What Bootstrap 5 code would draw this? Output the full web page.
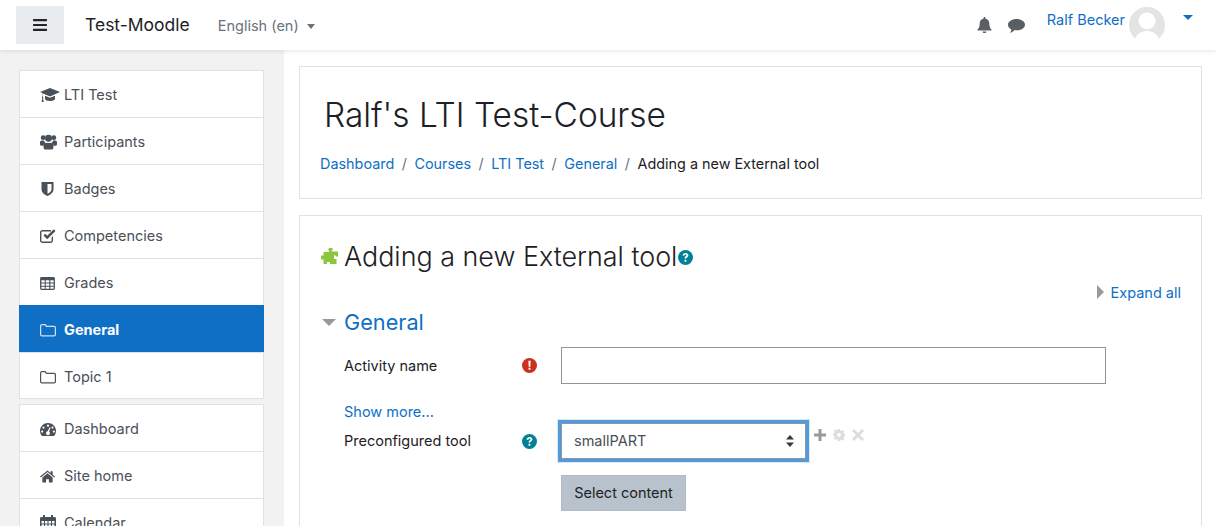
<!DOCTYPE html>
<html lang="en">
<head>
<meta charset="UTF-8" />
<title>Adding a new External tool</title>
<link href="https://cdn.jsdelivr.net/npm/bootstrap@5.3.2/dist/css/bootstrap.min.css" rel="stylesheet" />
<style>
  html, body { height: 526px; overflow: hidden; }
  body { font-family: Inter, "Liberation Sans", sans-serif; font-size: 14.5px; color: #1d2125; background: #fff; }
  a { color: #0f6fc5; text-decoration: none; }
  .top-bar { height: 50px; padding: 0 16px; box-shadow: 0 2px 4px rgba(0,0,0,.08); position: relative; z-index: 2; }
  .menu-toggle { width: 48px; height: 38px; background: #e9ecef; border: 0; padding: 0; }
  .site-name { font-size: 17.5px; margin-left: 21px; margin-top: 1px; color: #1d2125; }
  .lang-menu { margin-left: 28px; margin-top: 1px; color: #6a737b; }
  .caret-down { display: inline-block; width: 0; height: 0; border-left: 4.5px solid transparent; border-right: 4.5px solid transparent; border-top: 5px solid currentColor; }
  .lang-menu .caret-down { margin-left: 8px; vertical-align: 2px; }
  .top-icon { fill: #5a5f64; }
  .comment-ic { margin-left: 16px; margin-top: 2px; }
  .user-name { margin-left: 22px; margin-bottom: 10px; }
  .user-pic { width: 36px; height: 36px; margin-left: 4px; margin-right: 18px; }
  .user-caret { color: #0f6fc5; border-left-width: 5px; border-right-width: 5px; margin-right: 7px; margin-bottom: 16px; }
  .page-wrap { height: 476px; overflow: hidden; }
  .side-col { width: 284px; flex: none; background: #f2f2f2; padding: 20px 20px 0 19px; }
  .side-list { border-radius: 0; margin-bottom: 5px; }
  .side-list .list-group-item { height: 47px; padding: 2px 0 0 20px; display: flex; align-items: center; color: #495057; border-radius: 0; border-color: #dee2e6; border-width: 1px 1px 0; margin-top: 0; }
  .side-list .list-group-item:last-child { border-bottom-width: 1px; }
  .side-list .list-group-item.active { background: #0f6fc5; border-color: #0f6fc5; color: #fff; font-weight: 700; margin-top: 0; }
  .side-icon { width: 24px; flex: none; display: flex; }
  .side-icon svg { fill: #495057; }
  .side-icon .folder-ic { fill: none; stroke: #495057; }
  .active .side-icon .folder-ic { stroke: #cfe2f5; }
  .main-col { padding: 16px 14px 0 15px; min-width: 0; }
  .head-box, .form-box { border: 1px solid #dee2e6; border-radius: 0; }
  .head-box { height: 133px; padding: 0 20px; margin-bottom: 16px; }
  .course-title { font-size: 33.4px; font-weight: 300; line-height: 42px; margin: 27px 0 0 4px; color: #1d2125; }
  .crumbs { margin: 17px 0 0; font-size: 14.4px; --bs-breadcrumb-item-padding-x: 7.5px; --bs-breadcrumb-divider-color: #6a737b; --bs-breadcrumb-item-active-color: #1d2125; }
  .form-box { padding: 19px 20px 20px; height: 400px; }
  .page-head { height: 42px; }
  .page-head h2 { font-size: 26.9px; font-weight: 300; margin: 0 0 0 5px; line-height: 42px; }
  .help-ic { margin-left: 1px; margin-top: 3px; }
  .expand-row { height: 20px; margin-top: 5px; }
  .arrow-right { display: inline-block; width: 0; height: 0; border-top: 7px solid transparent; border-bottom: 7px solid transparent; border-left: 7px solid #999; margin-right: 7px; vertical-align: -1px; }
  .sec-head { margin-top: 3px; height: 34px; }
  .arrow-down { display: inline-block; width: 0; height: 0; border-left: 7px solid transparent; border-right: 7px solid transparent; border-top: 7px solid #999; margin-right: 8px; margin-left: 2px; }
  .sec-head a { font-size: 21.7px; font-weight: 400; }
  .field-label { width: 202px; padding-left: 24px; flex: none; }
  .field-mark { width: 39px; flex: none; display: flex; }
  .name-row { margin-top: 8px; height: 37px; }
  .name-input { width: 545px; height: 37px; border: 1px solid #8f959e; border-radius: 0; }
  .more-row { margin-top: 17px; padding-left: 24px; height: 20px; }
  .tool-row { height: 40px; }
  .tool-select { width: 245px; height: 36px; margin: 0 3px 0 0; border-radius: 0; border: 1px solid #8f959e; outline: 3px solid #4f9bdc; font-size: 14.5px; color: #495057; padding: 0 24px 0 12px; background-image: url("data:image/svg+xml,%3csvg xmlns='http://www.w3.org/2000/svg' viewBox='0 0 8 12'%3e%3cpath fill='%23343a40' d='M4 0 8 4.500H0zM4 12 0 7.500H8z'/%3e%3c/svg%3e"); background-size: 8px 12px; background-position: right 11px center; box-shadow: 0 0 0 4px #dbe9f6; }
  .tool-actions { margin-left: 5px; margin-bottom: 13px; gap: 7px; }
  .select-btn { width: 125px; height: 36px; margin: 14px 0 0 241px; background: #b8c2cc; border: 1px solid #b0bac4; border-radius: 0; color: #1d2125; font-size: 14.5px; padding: 0; }
</style>
</head>
<body>
<svg width="0" height="0" class="d-none">
  <symbol id="ic-cap" viewBox="0 0 20 16"><path d="M10 1 0 5l2.600 1v3.200c-.5.300-.7.700-.7 1.100 0 .4.200.7.400 1L1.600 15h2.200l-.8-3.600c.3-.3.400-.6.400-1 0-.4-.2-.8-.5-1V6.500L10 9.500 20 5zM5 8.700v3c0 1.300 2.300 2.300 5 2.300s5-1 5-2.300v-3l-5 2z"/></symbol>
  <symbol id="ic-users" viewBox="0 0 18 16"><circle cx="3.400" cy="3.400" r="2.600"/><circle cx="14.600" cy="3.400" r="2.600"/><circle cx="9" cy="4" r="3.700"/><path d="M0 8.500c0-1.200.8-2.200 2-2.200h2.100c.3 1 .9 1.800 1.700 2.400-1.300.5-2.200 1.700-2.300 3.200h-2C.5 11.900 0 11.300 0 10.500zM18 8.500c0-1.200-.8-2.200-2-2.200h-2.100c-.3 1-.9 1.800-1.700 2.400 1.300.5 2.200 1.700 2.300 3.200h2c1 0 1.500-.6 1.500-1.400zM6 9h6c1.300 0 2.200 1 2.200 2.400v2.400c0 1.200-.7 2.200-1.800 2.200H5.600c-1.100 0-1.800-1-1.800-2.200v-2.400C3.800 10 4.700 9 6 9z"/></symbol>
  <symbol id="ic-shield" viewBox="0 0 14 16"><path d="M1 1h12v7.500c0 3-3.200 5.500-6 6.500-2.800-1-6-3.500-6-6.500zM7 3v9.800c2-.9 4-2.500 4-4.400V3z"/></symbol>
  <symbol id="ic-check" viewBox="0 0 16 16"><path d="M2.500 2H11v1.400H2.500c-.6 0-1.100.5-1.100 1.100v7.900c0 .6.500 1.100 1.100 1.100h8c.6 0 1.100-.5 1.100-1.100V9.500L13 8v4.400c0 1.400-1.100 2.500-2.500 2.500h-8C1.100 14.900 0 13.800 0 12.400V4.500C0 3.100 1.100 2 2.500 2z"/><path d="m3.500 7.500 1.700-1.700 2 2L13.800 1.300 15.500 3 7.200 11.300z"/></symbol>
  <symbol id="ic-table" viewBox="0 0 16 14"><path fill-rule="evenodd" d="M1.500 0h13c.8 0 1.500.7 1.500 1.500v11c0 .8-.7 1.500-1.500 1.500h-13C.7 14 0 13.300 0 12.500v-11C0 .7.700 0 1.500 0zM1.400 3.500v2.500h3.600V3.500zm4.700 0v2.500h3.800V3.500zm5 0v2.500h3.500V3.500zM1.400 7.100v2.400h3.600V7.100zm4.700 0v2.400h3.800V7.100zm5 0v2.400h3.500V7.100zM1.400 10.600V12.600h3.600v-2zm4.700 0v2h3.800v-2zm5 0v2h3.500v-2z"/></symbol>
  <symbol id="ic-gauge" viewBox="0 0 16 13"><path fill-rule="evenodd" d="M8 0c4.400 0 8 3.500 8 7.800 0 1.700-.5 3.300-1.500 4.700-.2.300-.5.500-.8.500H2.300c-.3 0-.6-.2-.8-.5C.5 11.100 0 9.500 0 7.800 0 3.500 3.600 0 8 0zM8 1.600a1.100 1.100 0 1 0 0 2.200 1.100 1.100 0 0 0 0-2.200zM3.500 3.500a1.100 1.100 0 1 0 0 2.200 1.100 1.100 0 0 0 0-2.200zM12.500 3.500a1.100 1.100 0 1 0 0 2.200 1.100 1.100 0 0 0 0-2.200zM2.100 7.500a1.100 1.100 0 1 0 0 2.200 1.100 1.100 0 0 0 0-2.200zM13.900 7.500a1.100 1.100 0 1 0 0 2.200 1.100 1.100 0 0 0 0-2.200zM9.700 4.200 7.600 8.300c-1 .2-1.600 1-1.600 1.900 0 1.100.9 2 2 2s2-.9 2-2c0-.7-.3-1.300-.9-1.700L10.600 4.500z"/></symbol>
  <symbol id="ic-home" viewBox="0 0 16 13"><path d="M8 3 2.500 7.500V12.500c0 .3.200.5.500.5h3.500V9.500h3V13H13c.3 0 .5-.2.5-.5V7.500z"/><path d="M8 0 0 6.500l.9 1.100L8 1.800l7.100 5.800.9-1.100-2.500-2V1h-2.200v1.700z"/></symbol>
  <symbol id="ic-cal" viewBox="0 0 16 16"><path fill-rule="evenodd" d="M3 0h2v2h6V0h2v2h1.500c.8 0 1.500.7 1.500 1.500v11c0 .8-.7 1.500-1.500 1.500h-13C.7 16 0 15.300 0 14.500v-11C0 2.700.7 2 1.500 2H3zM1.500 6v2.500H4V6zm3.500 0v2.500h2.500V6zm3.500 0v2.500H11V6zM12 6v2.500h2.500V6zM1.500 9.500V12H4V9.500zm3.500 0V12h2.500V9.500zm3.500 0V12H11V9.500zm3.500 0V12h2.500V9.500z"/></symbol>
  <symbol id="ic-folder" viewBox="0 0 16 14"><path stroke-width="1.200" d="M2 1.600h3.200l1.200 1.700H14c.8 0 1.400.6 1.400 1.400v6.700c0 .8-.6 1.400-1.400 1.400H2c-.8 0-1.400-.6-1.400-1.400V3C.6 2.200 1.200 1.600 2 1.600z"/></symbol>
  <symbol id="ic-help" viewBox="0 0 16 16"><circle cx="8" cy="8" r="8" fill="#008196"/><path d="M5 6c0-1.800 1.300-2.900 3.100-2.900 1.700 0 3 1 3 2.500 0 1.300-.8 1.800-1.500 2.300-.6.400-.8.600-.8 1.200H7c0-1.300.5-1.800 1.200-2.300.5-.4.900-.6.900-1.100 0-.5-.5-.8-1-.8-.7 0-1.100.4-1.200 1.100zM7 10.500h1.900v1.900H7z" fill="#fff"/></symbol>
</svg>

<nav class="top-bar d-flex align-items-center bg-white">
  <button class="menu-toggle d-flex align-items-center justify-content-center" type="button" aria-label="Menu">
    <svg width="14" height="12" viewBox="0 0 14 12" fill="#212529"><rect width="14" height="2.200" rx=".5"/><rect y="4.900" width="14" height="2.200" rx=".5"/><rect y="9.800" width="14" height="2.200" rx=".5"/></svg>
  </button>
  <a class="site-name" href="#">Test-Moodle</a>
  <a class="lang-menu" href="#">English ‎(en)‎<span class="caret-down"></span></a>
  <div class="ms-auto d-flex align-items-center">
    <svg class="top-icon" width="15" height="16" viewBox="0 0 15 16"><path d="M7.500 0c.6 0 1 .4 1 1v.7c2.400.4 3.800 2.300 3.800 4.800 0 3 .7 4.600 2.200 6v1H.500v-1c1.500-1.400 2.200-3 2.200-6 0-2.500 1.400-4.400 3.800-4.800V1c0-.6.400-1 1-1zM5.600 14.500h3.800c0 1-.8 1.500-1.900 1.500s-1.900-.5-1.900-1.500z"/></svg>
    <svg class="top-icon comment-ic" width="17" height="14" viewBox="0 0 17 14"><path d="M8.500 0C13.200 0 17 2.500 17 5.700s-3.800 5.600-8.500 5.600c-.7 0-1.300 0-1.900-.2C5.400 12.400 3.600 13.500 2 14c.7-1 1.200-2 1.300-3.700C1.300 9.300 0 7.600 0 5.700 0 2.500 3.800 0 8.500 0z"/></svg>
    <a class="user-name" href="#">Ralf Becker</a>
    <svg class="user-pic" viewBox="0 0 36 36"><circle cx="18" cy="18" r="18" fill="#e4e4e4"/><circle cx="18" cy="14" r="8.500" fill="#fff"/><path d="M5 36c1-8 6-12 13-12s12 4 13 12z" fill="#fff"/></svg>
    <span class="caret-down user-caret"></span>
  </div>
</nav>

<div class="page-wrap d-flex">
  <aside class="side-col">
    <div class="list-group side-list">
      <a class="list-group-item" href="#"><span class="side-icon"><svg width="20" height="16"><use href="#ic-cap"/></svg></span>LTI Test</a>
      <a class="list-group-item" href="#"><span class="side-icon"><svg width="17" height="16"><use href="#ic-users"/></svg></span>Participants</a>
      <a class="list-group-item" href="#"><span class="side-icon"><svg width="15" height="16"><use href="#ic-shield"/></svg></span>Badges</a>
      <a class="list-group-item" href="#"><span class="side-icon"><svg width="16" height="16"><use href="#ic-check"/></svg></span>Competencies</a>
      <a class="list-group-item" href="#"><span class="side-icon"><svg width="15" height="13"><use href="#ic-table"/></svg></span>Grades</a>
      <a class="list-group-item active" href="#"><span class="side-icon"><svg class="folder-ic" width="16" height="14"><use href="#ic-folder"/></svg></span>General</a>
      <a class="list-group-item" href="#"><span class="side-icon"><svg class="folder-ic" width="16" height="14"><use href="#ic-folder"/></svg></span>Topic 1</a>
    </div>
    <div class="list-group side-list">
      <a class="list-group-item" href="#"><span class="side-icon"><svg width="16" height="13"><use href="#ic-gauge"/></svg></span>Dashboard</a>
      <a class="list-group-item" href="#"><span class="side-icon"><svg width="15" height="13"><use href="#ic-home"/></svg></span>Site home</a>
      <a class="list-group-item" href="#"><span class="side-icon"><svg width="16" height="16"><use href="#ic-cal"/></svg></span>Calendar</a>
    </div>
  </aside>

  <main class="main-col flex-grow-1">
    <div class="head-box card">
      <h1 class="course-title">Ralf's LTI Test-Course</h1>
      <ol class="breadcrumb crumbs">
        <li class="breadcrumb-item"><a href="#">Dashboard</a></li>
        <li class="breadcrumb-item"><a href="#">Courses</a></li>
        <li class="breadcrumb-item"><a href="#">LTI Test</a></li>
        <li class="breadcrumb-item"><a href="#">General</a></li>
        <li class="breadcrumb-item active">Adding a new External tool</li>
      </ol>
    </div>

    <div class="form-box card">
      <div class="page-head d-flex align-items-center">
        <svg width="19" height="18" viewBox="0 0 19 18"><path fill="#8cc63c" d="M9 1h3.500v2.500h-1v1H18v5h-2v-1h-2v3.500h2.500V17H10v-2H7v2H3.500v-4.500H1v-4h2.500V5H9V3.500H8z"/></svg>
        <h2>Adding a new External tool</h2>
        <svg class="help-ic" width="15" height="15"><use href="#ic-help"/></svg>
      </div>
      <div class="expand-row text-end"><span class="arrow-right"></span><a href="#">Expand all</a></div>
      <div class="sec-head d-flex align-items-center"><span class="arrow-down"></span><a href="#">General</a></div>

      <div class="name-row d-flex align-items-center">
        <label class="field-label" for="activityName">Activity name</label>
        <span class="field-mark"><svg width="15" height="15" viewBox="0 0 16 16"><circle cx="8" cy="8" r="8" fill="#ca3120"/><path d="M6.800 3h2.400l-.3 6.300H7.100zM7 10.500h2v2H7z" fill="#fff"/></svg></span>
        <input id="activityName" class="form-control name-input" type="text" />
      </div>

      <div class="more-row"><a href="#">Show more...</a></div>

      <div class="tool-row d-flex align-items-center">
        <label class="field-label" for="toolSelect">Preconfigured tool</label>
        <span class="field-mark"><svg width="15" height="15"><use href="#ic-help"/></svg></span>
        <select id="toolSelect" class="form-select tool-select"><option>smallPART</option></select>
        <div class="tool-actions d-flex align-items-center">
          <svg width="12" height="12" viewBox="0 0 12 12" fill="#999"><path d="M4.500 0h3v4.500H12v3H7.500V12h-3V7.500H0v-3h4.500z"/></svg>
          <svg width="12" height="12" viewBox="0 0 12 12" fill="#ddd"><path fill-rule="evenodd" d="M5 0h2l.3 1.600 1.200.5L9.900 1.200l1.400 1.400-.9 1.300.5 1.200 1.600.3v2l-1.600.3-.5 1.200.9 1.400-1.400 1.400-1.400-.9-1.200.5L7 12H5l-.3-1.600-1.200-.5-1.400.9L.7 9.400l.9-1.400-.5-1.200L-.4 6.500v-2l1.500-.3.500-1.200-.9-1.300 1.400-1.400 1.400.9 1.200-.5zM6 4a2 2 0 1 0 0 4 2 2 0 0 0 0-4z"/></svg>
          <svg width="12" height="12" viewBox="0 0 12 12" fill="#ddd"><path d="M2 0 6 4l4-4 2 2-4 4 4 4-2 2-4-4-4 4-2-2 4-4-4-4z"/></svg>
        </div>
      </div>

      <div><button class="btn select-btn" type="button">Select content</button></div>
    </div>
  </main>
</div>
<script src="https://cdn.jsdelivr.net/npm/bootstrap@5.3.2/dist/js/bootstrap.bundle.min.js"></script>
</body>
</html>
